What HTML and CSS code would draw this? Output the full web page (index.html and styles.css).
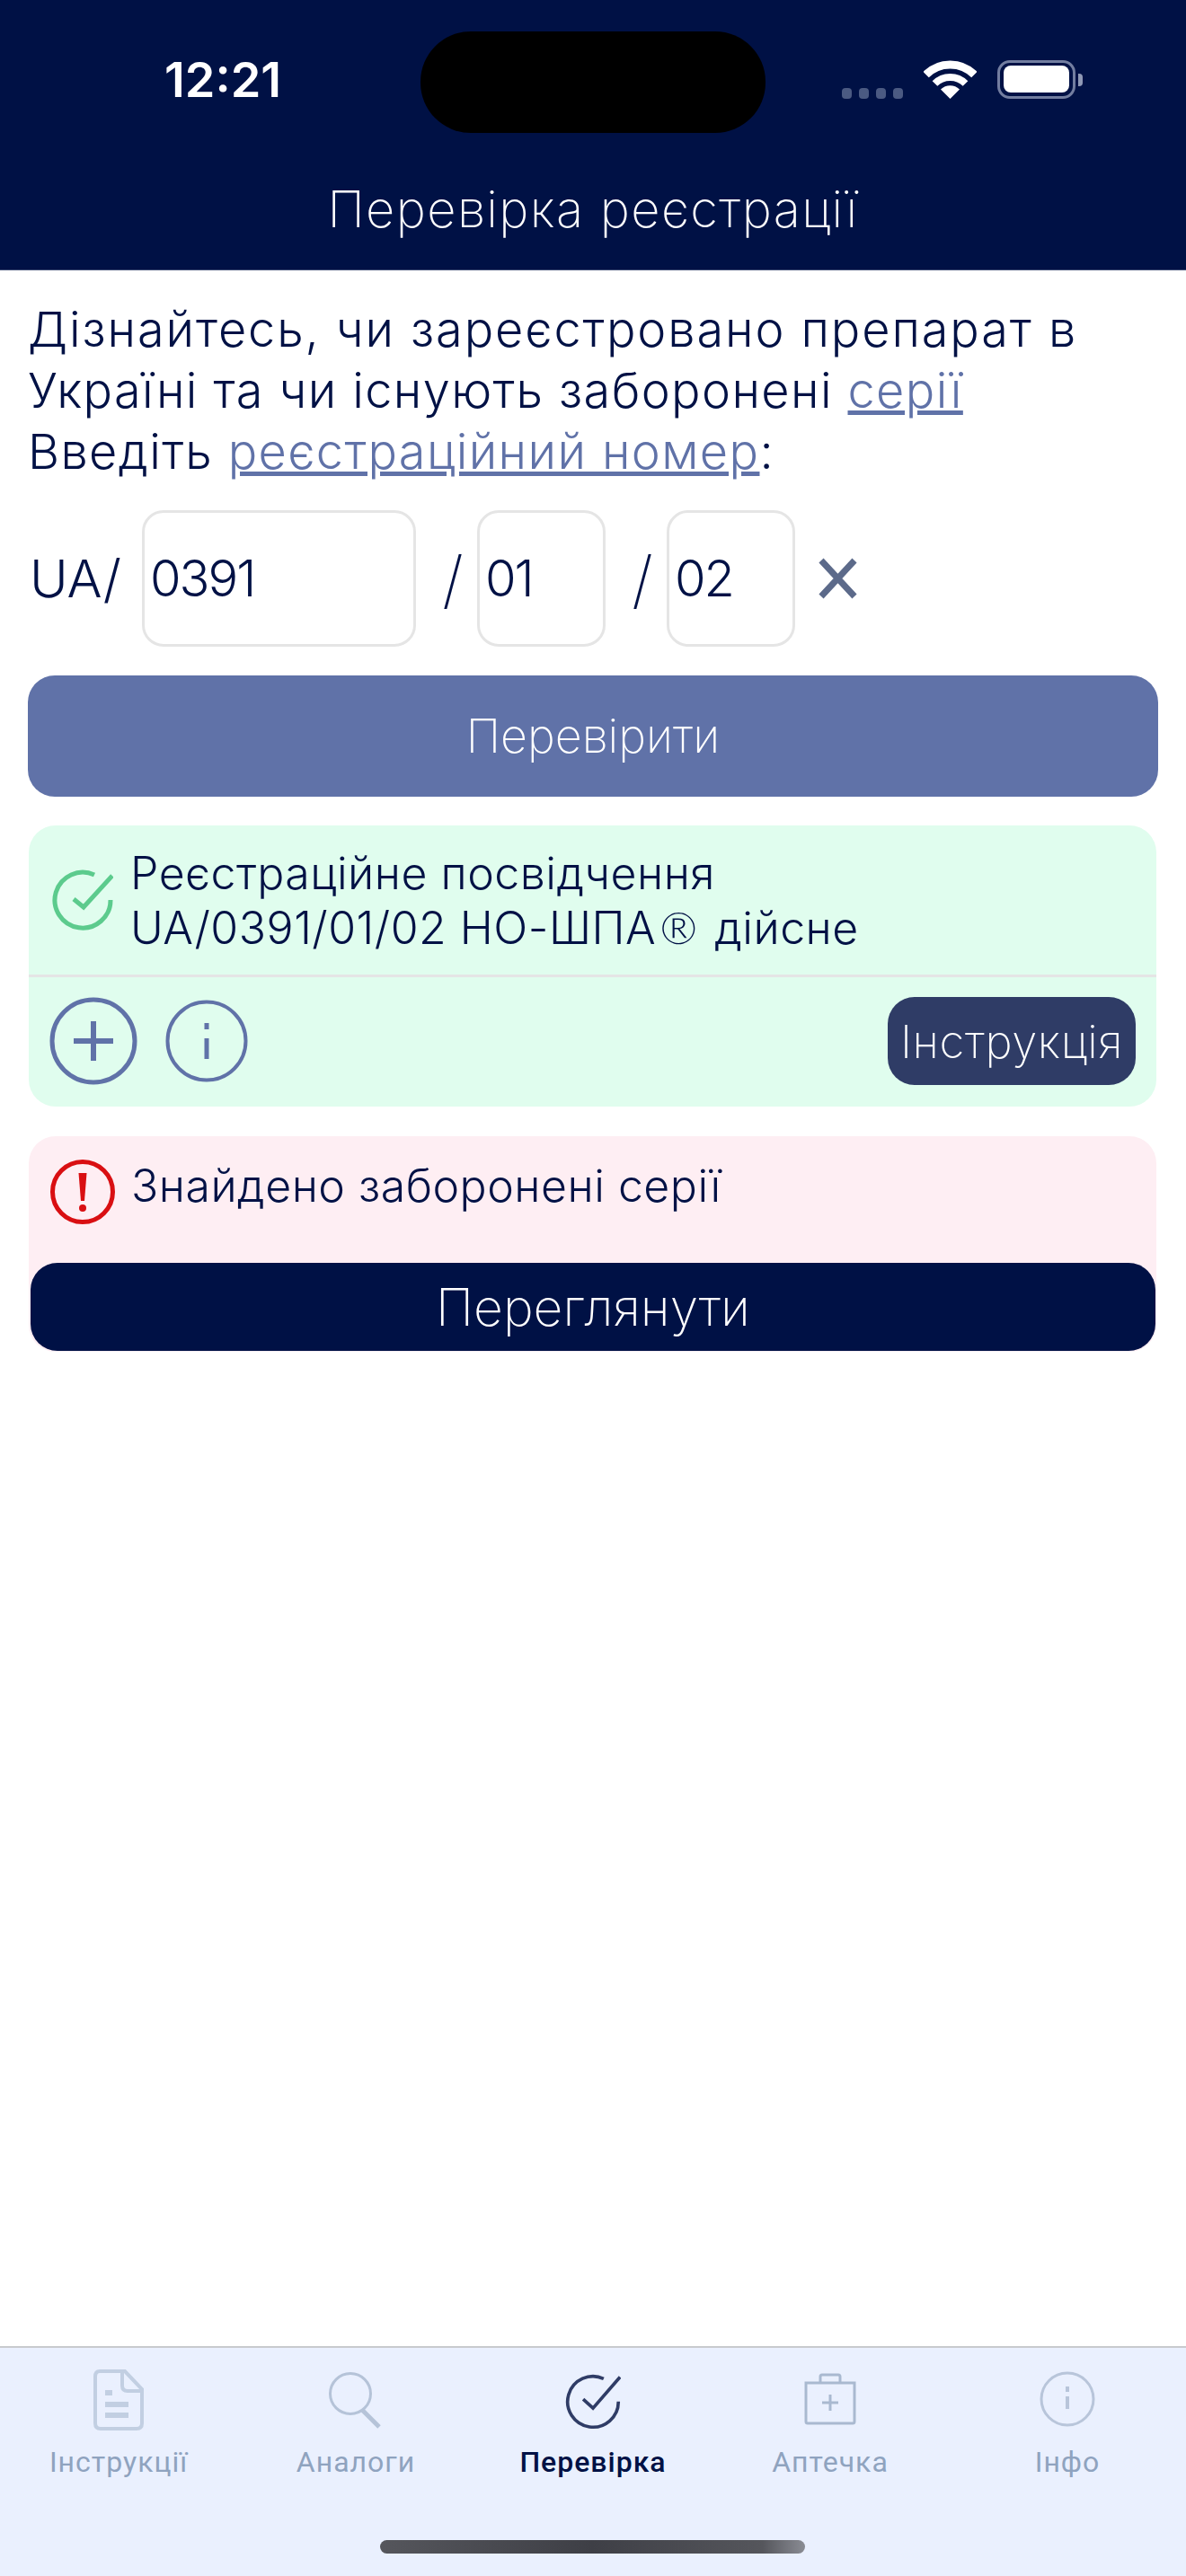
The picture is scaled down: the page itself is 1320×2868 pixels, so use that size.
FILE: index.html
```html
<!DOCTYPE html>
<html lang="uk">
<head>
    <meta charset="UTF-8">
    <title>Перевірка реєстрації</title>
    <link rel="stylesheet" href="styles.css">
</head>
<body>
<div class="app">
    <header class="header">
        <div class="status">
            <span class="time">12:21</span>
            <span class="island"></span>
            <span class="dots"><i></i><i></i><i></i><i></i></span>
            <svg class="wifi" width="59" height="43" viewBox="0 0 59 43">
                <path d="M2.6 16.1A38 38 0 0 1 56.4 16.1" fill="none" stroke="#fff" stroke-width="9"/>
                <path d="M12.5 26A24 24 0 0 1 46.5 26" fill="none" stroke="#fff" stroke-width="8"/>
                <path d="M29.5 43L19 32.5A15 15 0 0 1 40 32.5Z" fill="#fff"/>
            </svg>
            <span class="battery"><b></b></span>
            <span class="battery-nub"></span>
        </div>
        <h1 class="title">Перевірка реєстрації</h1>
    </header>

    <main class="main">
        <p class="intro">Дізнайтесь, чи зареєстровано препарат в<br>
            <span class="tight">Україні та чи існують заборонені <a href="#">серії</a></span><br>
            <span class="tight">Введіть <a href="#">реєстраційний номер</a>:</span></p>

        <form class="reg-form" action="javascript:void(0);">
            <span class="prefix">UA/</span>
            <input class="field field-long" type="text" value="0391">
            <span class="slash">/</span>
            <input class="field" type="text" value="01">
            <span class="slash">/</span>
            <input class="field" type="text" value="02">
            <svg class="clear" width="43" height="46" viewBox="0 0 43 46">
                <path d="M3 3L40 43M40 3L3 43" fill="none" stroke="#5c6a8a" stroke-width="7"/>
            </svg>
        </form>

        <button class="check-btn" type="button">Перевірити</button>

        <section class="card card-ok">
            <div class="card-row">
                <svg class="card-icon" width="68" height="68" viewBox="0 0 68 68">
                    <path d="M47 6A31 31 0 1 0 65 34" fill="none" stroke="#5ccb8d" stroke-width="5"/>
                    <path d="M24 33L35 42L67 7" fill="none" stroke="#5ccb8d" stroke-width="5"/>
                </svg>
                <p class="card-text">Реєстраційне посвідчення<br>UA/0391/01/02 НО-ШПА<span class="reg">®</span> дійсне</p>
            </div>
            <div class="card-actions">
                <svg width="98" height="98" viewBox="0 0 98 98">
                    <circle cx="49" cy="49" r="46" fill="none" stroke="#6072a8" stroke-width="5"/>
                    <path d="M49 27V71M27 49H71" fill="none" stroke="#6072a8" stroke-width="6"/>
                </svg>
                <svg class="info" width="92" height="92" viewBox="0 0 92 92">
                    <circle cx="46" cy="46" r="43.5" fill="none" stroke="#6072a8" stroke-width="4"/>
                    <path d="M46 26V33M46 43V66" fill="none" stroke="#6072a8" stroke-width="5"/>
                </svg>
                <button class="doc-btn" type="button">Інструкція</button>
            </div>
        </section>

        <section class="card card-bad">
            <div class="card-row card-row-bad">
                <svg class="card-icon" width="74" height="74" viewBox="0 0 74 74">
                    <circle cx="37" cy="37" r="33.5" fill="none" stroke="#d90f12" stroke-width="5"/>
                    <path d="M32.5 16H41.5L39 47H35Z" fill="#d90f12"/>
                    <circle cx="37" cy="55" r="4" fill="#d90f12"/>
                </svg>
                <p class="card-text">Знайдено заборонені серії</p>
            </div>
            <button class="view-btn" type="button">Переглянути</button>
        </section>
    </main>

    <nav class="tabs">
        <div class="tab">
            <svg width="60" height="72" viewBox="0 0 60 72">
                <path d="M9 4H37L56 24V62Q56 68 50 68H10Q4 68 4 62V10Q4 4 9 4Z" fill="none" stroke="#c2cfe2" stroke-width="4"/>
                <path d="M34 5V20Q34 26 40 26H55" fill="none" stroke="#c2cfe2" stroke-width="4"/>
                <path d="M15 28H23M15 41H41M15 53H41" fill="none" stroke="#c2cfe2" stroke-width="6"/>
            </svg>
            <span>Інструкції</span>
        </div>
        <div class="tab">
            <svg width="60" height="72" viewBox="0 0 60 72">
                <circle cx="24" cy="29" r="22.5" fill="none" stroke="#b5c3d8" stroke-width="3"/>
                <path d="M37 47L56 66" fill="none" stroke="#b5c3d8" stroke-width="5"/>
            </svg>
            <span>Аналоги</span>
        </div>
        <div class="tab tab-active">
            <svg width="62" height="72" viewBox="0 0 68 72">
                <path d="M47 10A31 31 0 1 0 65 38" fill="none" stroke="#2f3c66" stroke-width="4"/>
                <path d="M22 35L34 46L67 8" fill="none" stroke="#2f3c66" stroke-width="4"/>
            </svg>
            <span>Перевірка</span>
        </div>
        <div class="tab">
            <svg width="60" height="72" viewBox="0 0 60 72">
                <path d="M3 17H57V60Q57 62 55 62H5Q3 62 3 60Z" fill="none" stroke="#a9b9d0" stroke-width="3"/>
                <path d="M19 17V10Q19 8 21 8H39Q41 8 41 10V17" fill="none" stroke="#a9b9d0" stroke-width="3"/>
                <path d="M30 30V48M21 39H39" fill="none" stroke="#a9b9d0" stroke-width="3"/>
            </svg>
            <span>Аптечка</span>
        </div>
        <div class="tab">
            <svg width="62" height="72" viewBox="0 0 62 72">
                <circle cx="31" cy="35" r="29" fill="none" stroke="#b8c5da" stroke-width="3"/>
                <path d="M31 21V27M31 32V46" fill="none" stroke="#b8c5da" stroke-width="4"/>
            </svg>
            <span>Інфо</span>
        </div>
        <div class="home-bar"></div>
    </nav>
</div>
</body>
</html>
```

FILE: styles.css
```css
* {
    box-sizing: border-box;
}

body {
    margin: 0;
    background-color: #fff;
    color: #001145;
    font-family: "Inter", "Noto Sans", sans-serif;
    font-weight: 300;
}

.app {
    display: flex;
    flex-direction: column;
    height: 2868px;
}

/* header */
.header {
    height: 301px;
    padding-top: 35px;
    background-color: #001145;
    border-bottom: 1px solid #3d4a72;
    color: #fff;
}

.status {
    display: flex;
    align-items: flex-start;
    height: 113px;
    padding-left: 183px;
}

.time {
    width: 285px;
    margin-top: 27px;
    font-size: 54px;
    font-weight: 600;
    line-height: 54px;
}

.island {
    width: 384px;
    height: 113px;
    border-radius: 56px;
    background-color: #000;
}

.dots {
    display: flex;
    gap: 8px;
    margin-top: 63px;
    margin-left: 85px;
}

.dots i {
    width: 11px;
    height: 12px;
    border-radius: 4px;
    background-color: #4b5a82;
}

.wifi {
    margin-top: 32px;
    margin-left: 23px;
}

.battery {
    width: 87px;
    height: 43px;
    margin-top: 32px;
    margin-left: 23px;
    padding: 3px 4px;
    border: 3px solid #737ea0;
    border-radius: 14px;
}

.battery b {
    display: block;
    height: 30px;
    border-radius: 8px;
    background-color: #fff;
}

.battery-nub {
    width: 5px;
    height: 14px;
    margin-top: 47px;
    margin-left: 3px;
    border-radius: 0 4px 4px 0;
    background-color: #8f99b5;
}

.title {
    margin: 45px 0 0;
    font-size: 56px;
    font-weight: 200;
    letter-spacing: 1.4px;
    line-height: 80px;
    text-align: center;
}

/* content */
.main {
    flex: 1;
    padding: 32px 32px 0;
}

.intro {
    margin: 0 0 0 -1px;
    font-size: 54px;
    letter-spacing: 1.9px;
    line-height: 68px;
}

.tight {
    letter-spacing: 1.4px;
}

.intro a {
    color: #6072a8;
}

.reg-form {
    display: flex;
    align-items: center;
    height: 152px;
    margin-top: 31px;
}

.prefix {
    width: 126px;
    padding-left: 1px;
    font-size: 58px;
}

.slash {
    width: 68px;
    padding-left: 14px;
    text-align: center;
    font-size: 70px;
    font-weight: 200;
}

.field {
    width: 143px;
    height: 152px;
    padding: 0 6px;
    border: 3px solid #e5e5e5;
    border-radius: 24px;
    background-color: #fff;
    color: #001145;
    font-family: inherit;
    font-weight: 300;
    font-size: 56px;
    letter-spacing: -2px;
}

.field-long {
    width: 305px;
}

.clear {
    margin-left: 26px;
}

.check-btn {
    display: block;
    width: 1258px;
    height: 135px;
    margin: 32px 0 0 -1px;
    border: none;
    border-radius: 30px;
    background-color: #6072a8;
    color: #fff;
    font-family: inherit;
    font-size: 52px;
    font-weight: 200;
}

.card {
    width: 1255px;
    border-radius: 30px;
}

.card-ok {
    height: 313px;
    margin-top: 32px;
    background-color: #e0fdee;
}

.card-bad {
    height: 240px;
    margin-top: 33px;
    padding-top: 25px;
    background-color: #feeef3;
}

.card-row {
    display: flex;
    gap: 19px;
    align-items: center;
    height: 169px;
    padding-left: 26px;
    border-bottom: 3px solid #e5e5e5;
}

.card-row-bad {
    gap: 17px;
    align-items: flex-start;
    height: 116px;
    padding-left: 23px;
    border-bottom: none;
}

.card-text {
    margin: 0;
    font-size: 50px;
    letter-spacing: 0.5px;
    line-height: 60px;
}

.reg {
    margin: 0 4px;
    font-family: "Lato", sans-serif;
}

.card-actions {
    display: flex;
    align-items: center;
    padding: 22px 23px 0;
}

.info {
    margin-left: 31px;
}

.doc-btn {
    width: 276px;
    height: 98px;
    margin-left: auto;
    padding: 0;
    border: none;
    border-radius: 30px;
    background-color: #2f3c66;
    color: #fff;
    font-family: inherit;
    font-size: 51px;
    font-weight: 200;
    letter-spacing: 0.6px;
}

.view-btn {
    display: block;
    width: 1252px;
    height: 98px;
    margin-left: 2px;
    border: none;
    border-radius: 30px;
    background-color: #001145;
    color: #fff;
    font-family: inherit;
    font-size: 57px;
    font-weight: 200;
}

/* tab bar */
.tabs {
    position: relative;
    display: grid;
    grid-template-columns: repeat(5, 1fr);
    height: 256px;
    border-top: 2px solid #c8cace;
    background-color: #eaf0fe;
}

.tab {
    display: flex;
    flex-direction: column;
    align-items: center;
    padding-top: 22px;
    color: #8fa3bf;
    font-family: "Roboto", sans-serif;
    font-size: 32px;
    font-weight: 400;
    letter-spacing: 1px;
}

.tab span {
    margin-top: 14px;
}

.tab-active {
    color: #001145;
    font-weight: 500;
}

.home-bar {
    position: absolute;
    left: 423px;
    bottom: 25px;
    width: 473px;
    height: 15px;
    border-radius: 8px;
    background: linear-gradient(90deg, #55565c, #3e3f46 50%, #55565c 90%, #8a8c94);
}
```
